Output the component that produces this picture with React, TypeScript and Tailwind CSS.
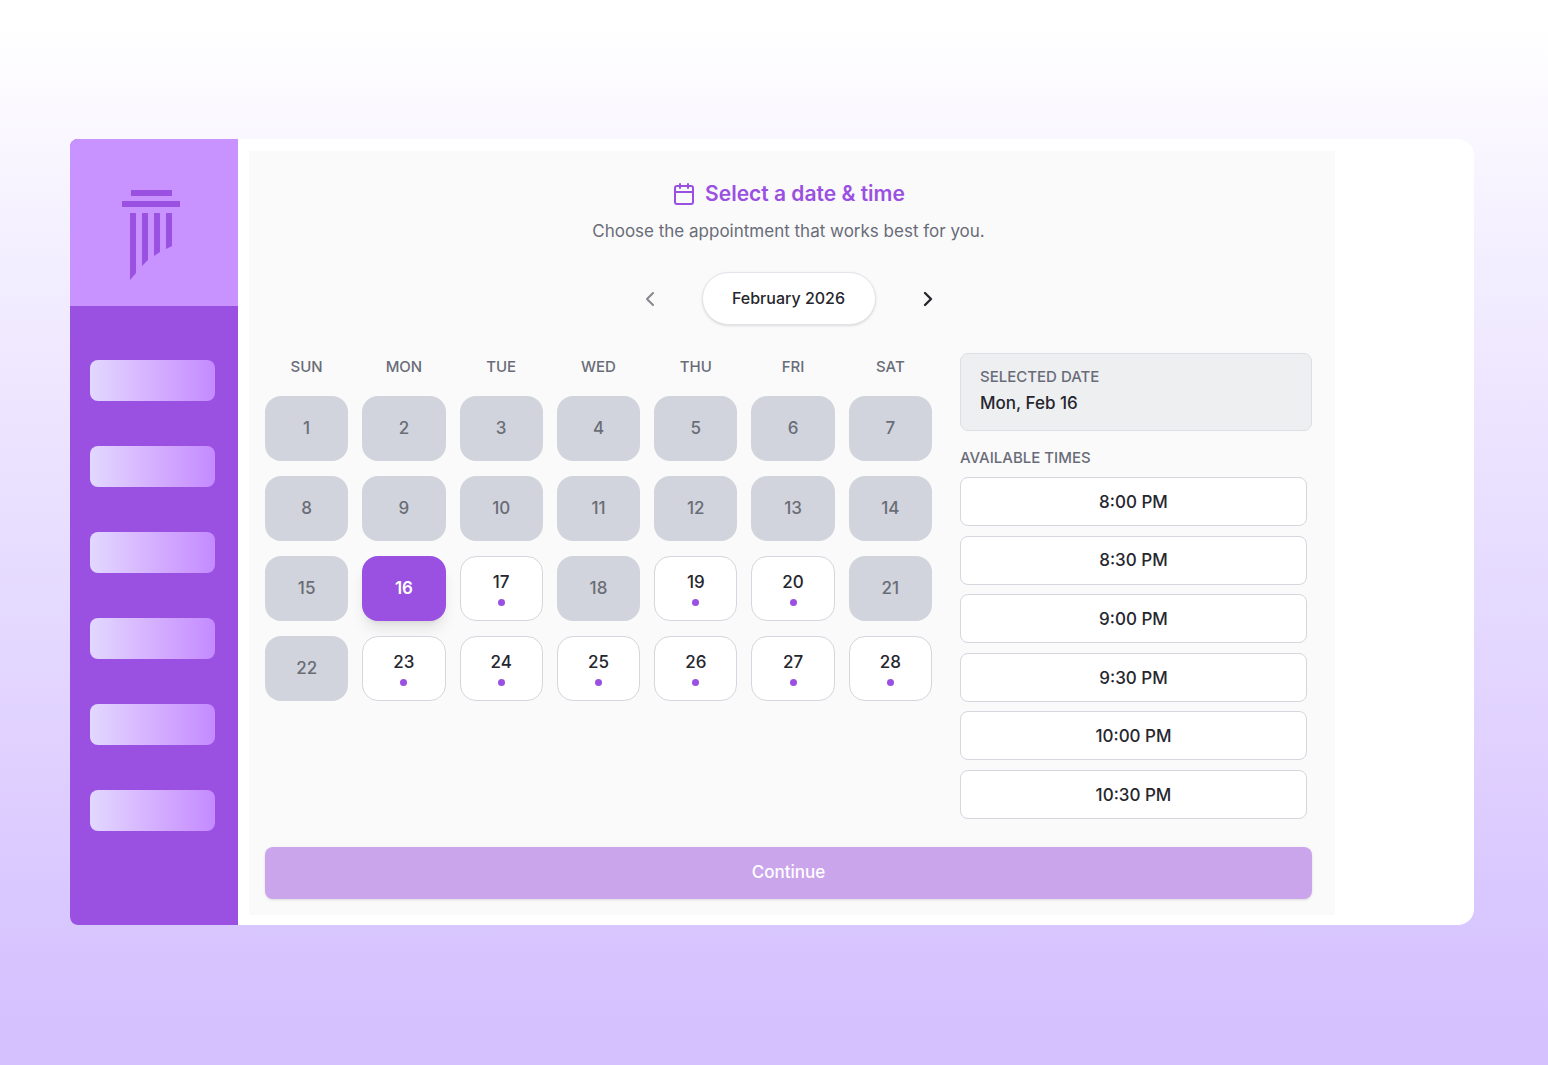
import { Calendar, ChevronLeft, ChevronRight } from "lucide-react";
import { useState } from "react";

const weekdays = ["Sun", "Mon", "Tue", "Wed", "Thu", "Fri", "Sat"];
const days = Array.from({ length: 28 }, (_, i) => i + 1);
const availableDays = [16, 17, 19, 20, 23, 24, 25, 26, 27, 28];
const times = [
  "8:00 PM",
  "8:30 PM",
  "9:00 PM",
  "9:30 PM",
  "10:00 PM",
  "10:30 PM",
];

function Logo() {
  return (
    <svg
      viewBox="0 0 58 90"
      className="h-[90px] w-[58px] fill-[#9a50e1]"
      role="img"
      aria-label="Logo"
    >
      <path d="M9 0h41v6H9z" />
      <path d="M0 11h58v6H0z" />
      <path d="M8 23h6v60l-6 7z" />
      <path d="M20 23h6v47l-6 6z" />
      <path d="M32 23h6v39l-6 4z" />
      <path d="M44 23h6v33l-6 3z" />
    </svg>
  );
}

function Sidebar() {
  return (
    <aside className="flex w-[168px] shrink-0 flex-col bg-[#9a50e1]">
      <div className="flex h-[167px] justify-center bg-[#c892ff] pt-[51px] pr-1.5">
        <Logo />
      </div>

      {/* Placeholder nav items */}

      <div className="flex flex-col gap-[45px] pt-[54px] pr-[23px] pl-5">
        {times.map((time) => (
          <div
            key={time}
            className="h-[41px] rounded-lg bg-linear-to-r from-[#e2d8ff] via-[#d5b0ff] to-[#c48aff]"
          />
        ))}
      </div>
    </aside>
  );
}

type DayProps = {
  day: number;
  selected: boolean;
  onSelect: (day: number) => void;
};

function Day({ day, selected, onSelect }: DayProps) {
  const base =
    "flex h-[65px] flex-col items-center justify-center rounded-2xl text-[17px] leading-6";

  if (selected) {
    return (
      <button
        type="button"
        aria-pressed="true"
        className={`${base} bg-[#9a50e1] pb-px font-semibold text-white shadow-lg`}
      >
        {day}
      </button>
    );
  }

  if (!availableDays.includes(day)) {
    return (
      <button
        type="button"
        disabled
        className={`${base} bg-[#d1d4dc] pb-px font-medium text-[#6a6d76]`}
      >
        {day}
      </button>
    );
  }

  return (
    <button
      type="button"
      onClick={() => onSelect(day)}
      className={`${base} gap-[5px] border border-[#d5d6de] bg-white pb-0.5 font-medium text-[#26262e]`}
    >
      {day}
      <span className="size-[7px] rounded-full bg-[#9a50e1]" />
    </button>
  );
}

export default function App() {
  const [selectedDay, setSelectedDay] = useState(16);
  const weekday = weekdays[(selectedDay - 1) % 7];

  return (
    <main className="min-h-screen bg-[linear-gradient(to_bottom,#fff_2%,#fbf9ff_10%,#f4f0ff_22%,#ede5ff_38%,#e5daff_56%,#dfcfff_73%,#d9c8ff_84%,#d6c1ff_96%)] pt-[139px] pr-[74px] pb-[140px] pl-[70px] font-['Inter',sans-serif]">
      <div className="flex overflow-hidden rounded-l-lg rounded-r-2xl bg-white">
        <Sidebar />

        <section className="mt-3 mr-[139px] mb-2.5 ml-[11px] flex-1 bg-[#fafafa] pt-[27px] pr-[23px] pb-4 pl-4">
          <header className="text-center">
            <h1 className="flex items-center justify-center gap-[9px] text-[21px] leading-8 font-semibold text-[#9a50e1]">
              <Calendar className="size-6" />
              Select a date &amp; time
            </h1>
            <p className="mt-[9px] text-[17px] leading-6 text-[#696c78]">
              Choose the appointment that works best for you.
            </p>
          </header>

          {/* Month */}

          <div className="mt-[29px] flex items-center justify-center gap-10">
            <button
              type="button"
              aria-label="Previous month"
              className="text-[#85878f]"
            >
              <ChevronLeft className="size-6" />
            </button>
            <span className="flex h-[53px] w-[174px] items-center justify-center rounded-full border border-[#e3e3ea] bg-white pb-0.5 text-base font-medium text-[#26262e] shadow-sm">
              February 2026
            </span>
            <button
              type="button"
              aria-label="Next month"
              className="text-[#26262e]"
            >
              <ChevronRight className="size-6" strokeWidth={2.4} />
            </button>
          </div>

          <div className="mt-7 grid grid-cols-[1fr_352px] gap-7">
            <div>
              <div className="grid h-[43px] grid-cols-7 gap-x-[14px] pt-1 text-center text-[15px] leading-5 font-medium text-[#696c78] uppercase">
                {weekdays.map((name) => (
                  <span key={name}>{name}</span>
                ))}
              </div>
              <div className="grid grid-cols-7 gap-x-[14px] gap-y-[15px]">
                {days.map((day) => (
                  <Day
                    key={day}
                    day={day}
                    selected={day === selectedDay}
                    onSelect={setSelectedDay}
                  />
                ))}
              </div>
            </div>

            {/* Times */}

            <div>
              <div className="h-[78px] rounded-lg border border-[#dedfe5] bg-[#eeeff1] px-[19px] pt-[13px]">
                <p className="text-[15px] leading-5 font-medium text-[#696c78] uppercase">
                  Selected date
                </p>
                <p className="mt-1 text-[17px] leading-6 font-medium text-[#26262e]">
                  {weekday}, Feb {selectedDay}
                </p>
              </div>
              <h2 className="mt-[17px] text-[15px] leading-5 font-medium text-[#696c78] uppercase">
                Available times
              </h2>
              <div className="mt-[9px] mr-[5px] flex h-[342px] flex-col justify-between">
                {times.map((time) => (
                  <button
                    key={time}
                    type="button"
                    className="h-[49px] rounded-lg border border-[#d5d6de] bg-white pt-0.5 text-[17px] font-medium text-[#26262e]"
                  >
                    {time}
                  </button>
                ))}
              </div>
            </div>
          </div>

          <button
            type="button"
            className="mt-7 h-[52px] w-full rounded-lg bg-[#cba5ec] text-[17px] font-medium text-white shadow-sm"
          >
            Continue
          </button>
        </section>
      </div>
    </main>
  );
}
